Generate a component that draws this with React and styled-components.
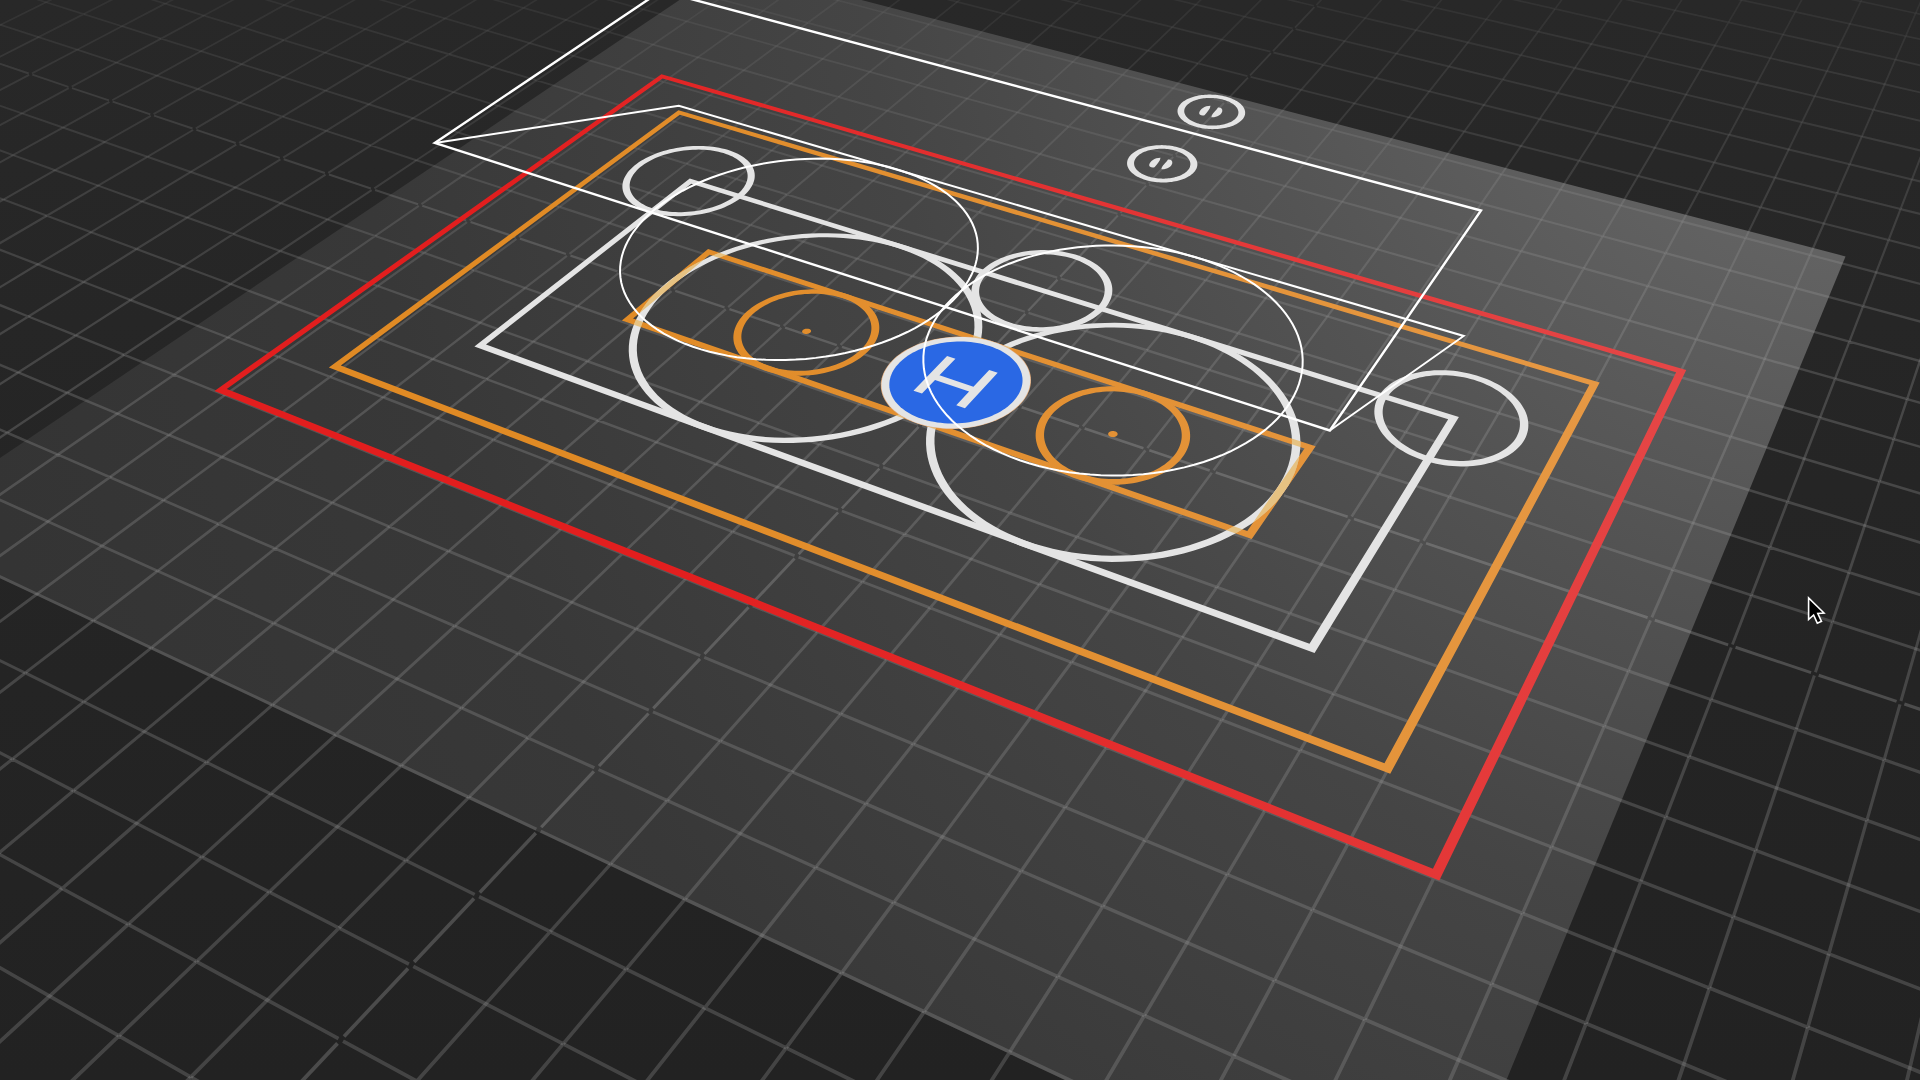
import React, { useMemo } from 'react';
import styled, { createGlobalStyle } from 'styled-components';

const GlobalStyle = createGlobalStyle`
  html, body, #root { height: 100%; }
  body { margin: 0; background: #242424; overflow: hidden; font-family: "Liberation Sans", sans-serif; }
`;

const Viewport = styled.main`
  width: 100%;
  height: 100vh;
  overflow: hidden;
  background: linear-gradient(#282828 0%, #252525 45%, #222222 100%);
`;

const Scene = styled.svg`
  display: block;
  width: 100%;
  height: 100%;
`;

const GridLines = styled.path`
  fill: none;
  stroke: ${(p) => (p.$major ? '#bcbcbc' : '#a4a4a4')};
`;

const Ground = styled.path`
  fill: url(#ground);
`;

const Marking = styled.path`
  fill: ${(p) => p.$paint};
  fill-rule: evenodd;
  opacity: ${(p) => p.$opacity ?? 1};
`;

const Outline = styled.path`
  fill: none;
  stroke: #ffffff;
  stroke-width: ${(p) => p.$width}px;
  stroke-linejoin: miter;
`;

const Pointer = styled.path`
  fill: #000000;
  stroke: #ffffff;
  stroke-width: 1.6px;
  stroke-linejoin: miter;
`;

/* ---- camera: ground plane (u, v) and height z to screen ---- */
const depth = (u, v, z = 0) => 1 - 0.0127 * u - 0.02449 * v - 0.0235 * z;

const project = (u, v, z = 0) => {
  const w = depth(u, v, z);
  return [
    (48.4 * u - 59.74 * v - 22.6 * z + 957.5) / w,
    (15.46 * u + 29.05 * v - 67 * z + 385.7) / w,
  ];
};

const SURFACE = 0.1;
const HOVER = 1.48;
const LINE = 0.115;

const toPath = (points, z = SURFACE) =>
  'M' +
  points
    .map(([u, v]) => project(u, v, z).map((n) => n.toFixed(2)).join(' '))
    .join('L') +
  'Z';

const box = (l, t, r, b) => [[l, t], [r, t], [r, b], [l, b]];

const frame = (l, t, r, b, width = LINE) => {
  const h = width / 2;
  return toPath(box(l - h, t - h, r + h, b + h)) + toPath(box(l + h, t + h, r - h, b - h));
};

const circle = (cu, cv, radius) =>
  Array.from({ length: 120 }, (_, i) => {
    const a = (i * Math.PI) / 60;
    return [cu + radius * Math.cos(a), cv + radius * Math.sin(a)];
  });

const ring = (cu, cv, radius, width = LINE) =>
  toPath(circle(cu, cv, radius + width / 2)) + toPath(circle(cu, cv, radius - width / 2));

/* ---- ground grid, grouped by distance so far cells are thin and faint ---- */
const STEP = 0.02;

function lineOpacity(w) {
  const o = w < 1 ? 0.27 : 0.27 - (w - 1) * 0.55;
  return Math.max(0.035, o);
}

function buildGrid() {
  const groups = new Map();
  const add = (a, b, major) => {
    const w = depth((a[0] + b[0]) / 2, (a[1] + b[1]) / 2);
    if (w < 0.45) return;
    const [x1, y1] = project(a[0], a[1]);
    const [x2, y2] = project(b[0], b[1]);
    if (Math.max(x1, x2) < 0 || Math.min(x1, x2) > 1920) return;
    if (Math.max(y1, y2) < 0 || Math.min(y1, y2) > 1080) return;
    const level = Math.round(w / STEP);
    const key = `${major ? 'M' : 'm'}${level}`;
    if (!groups.has(key)) groups.set(key, { key, major, w: level * STEP, d: '' });
    groups.get(key).d += `M${x1.toFixed(2)} ${y1.toFixed(2)}L${x2.toFixed(2)} ${y2.toFixed(2)}`;
  };
  const trim = (n, gap, major) => (major || n === 0 ? gap : 0);
  for (let i = -45; i <= 30; i += 1) {
    for (let j = -30; j <= 30; j += 1) {
      const gapU = j === 0 ? 0.045 : 0.03;
      const gapV = i === 0 ? 0.045 : 0.03;
      add([i + trim(i, gapU, j === 0), j], [i + 1 - trim(i + 1, gapU, j === 0), j], j === 0);
      add([i, j + trim(j, gapV, i === 0)], [i, j + 1 - trim(j + 1, gapV, i === 0)], i === 0);
    }
  }
  return [...groups.values()];
}

const helipadLetter = [
  [-0.42, -0.41], [-0.28, -0.41], [-0.28, 0.03], [0.28, 0.03], [0.28, -0.41], [0.42, -0.41],
  [0.42, 0.5], [0.28, 0.5], [0.28, 0.15], [-0.28, 0.15], [-0.28, 0.5], [-0.42, 0.5],
];

const PAD_CENTRES = [-2.54, 2.5];
const LAMP =
  'M1199.2 112.8C1200 109 1204.500 105.800 1210.500 105.700C1210.300 109 1207 112 1204.500 115.300C1202 116 1198.800 115.200 1199.200 112.800Z' +
  'M1218 107.600C1221 107.300 1222.700 109 1222.300 111.300C1221.300 115 1217 117.600 1211.400 117.300C1212 113.500 1216 111 1218 107.600Z';

export default function App() {
  const grid = useMemo(buildGrid, []);

  return (
    <>
      <GlobalStyle />
      <Viewport>
        <Scene viewBox="0 0 1920 1080" preserveAspectRatio="xMidYMid slice" role="img" aria-label="Site layout">
          <defs>
            <radialGradient id="ground" gradientUnits="userSpaceOnUse" cx="1900" cy="-100" r="2000">
              <stop offset="0.17" stopColor="#636363" />
              <stop offset="0.35" stopColor="#535353" />
              <stop offset="0.52" stopColor="#454545" />
              <stop offset="0.64" stopColor="#3f3f3f" />
              <stop offset="0.78" stopColor="#383838" />
              <stop offset="1" stopColor="#343434" />
            </radialGradient>
            <linearGradient id="red" gradientUnits="userSpaceOnUse" x1="700" y1="700" x2="1650" y2="350">
              <stop offset="0" stopColor="#e21e1e" />
              <stop offset="1" stopColor="#e54646" />
            </linearGradient>
            <linearGradient id="orange" gradientUnits="userSpaceOnUse" x1="600" y1="600" x2="1600" y2="350">
              <stop offset="0" stopColor="#e08a24" />
              <stop offset="1" stopColor="#e69844" />
            </linearGradient>
            <clipPath id="rings">
              <path clipRule="evenodd" d={PAD_CENTRES.map((u) => ring(u, 0.03, 2.5)).join('')} />
            </clipPath>
          </defs>

          <Ground d={toPath(box(-10.5, -9.05, 10.5, 9.08))} />

          {grid.map((g) => (
            <GridLines
              key={g.key}
              d={g.d}
              $major={g.major}
              strokeWidth={2.45 / g.w ** 1.2}
              strokeOpacity={lineOpacity(g.w)}
            />
          ))}

          <Marking $paint="url(#red)" d={frame(-9.02, -5, 9.02, 5.03)} />
          <Marking $paint="url(#orange)" d={frame(-8, -4.14, 8.01, 3.88)} />
          <Marking $paint="#e4e4e4" d={frame(-6.51, -2.47, 6.51, 2.53)} />
          <Marking $paint="url(#orange)" d={frame(-5.03, -0.96, 5, 1.03)} />

          {PAD_CENTRES.map((u) => (
            <Marking key={u} $paint="#e4e4e4" d={ring(u, 0.03, 2.5)} />
          ))}
          <g clipPath="url(#rings)">
            <Marking $paint="#e8a020" $opacity={0.5} d={frame(-5.03, -0.96, 5, 1.03)} />
          </g>
          {[-6.55, -0.01, 6.47].map((u) => (
            <Marking key={u} $paint="#e4e4e4" d={ring(u, -2.48, 1)} />
          ))}
          {PAD_CENTRES.map((u) => (
            <React.Fragment key={u}>
              <Marking $paint="url(#orange)" d={ring(u, 0.04, 1)} />
              <Marking $paint="url(#orange)" d={toPath(circle(u, 0.04, 0.065))} />
            </React.Fragment>
          ))}

          <Marking $paint="#e0a878" d={toPath(circle(0, 0.04, 1.06))} />
          <Marking $paint="#e4e4e4" d={toPath(circle(0, 0.04, 1.05))} />
          <Marking $paint="#2a68e4" d={toPath(circle(0, 0.04, 0.94))} />
          <Marking $paint="#e4e4e4" d={toPath(helipadLetter)} />

          {[-8.42, -6.53].map((v) => (
            <Marking key={v} $paint="#e4e4e4" d={ring(0, v, 0.52)} />
          ))}
          <Marking $paint="#e4e4e4" d={LAMP} />
          <Marking $paint="#e4e4e4" d={LAMP} transform="translate(-50 52)" />

          <Outline $width={2.4} d="M434.700 142.900L661 -9L1481 210.500L1329.800 430.500Z" />
          <Outline $width={2} d="M434.700 142.900L678.800 105.700L1463.700 336L1329.800 430.500" />
          {[-2.51, 2.46].map((u) => (
            <Outline key={u} $width={2} d={toPath(circle(u, 0.11, 2.5), HOVER)} />
          ))}

          <Pointer d="M1808.600 598L1808.600 619.500L1813.600 615L1817.300 623.200L1821.500 621.300L1817.800 613.500L1824 613Z" />
        </Scene>
      </Viewport>
    </>
  );
}
